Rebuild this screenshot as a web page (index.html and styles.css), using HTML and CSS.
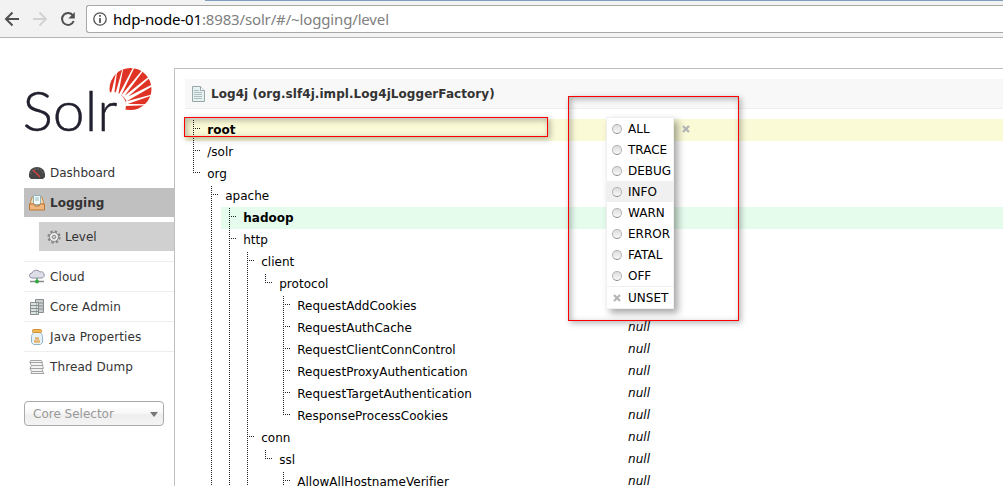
FILE: index.html
```html
<!DOCTYPE html>
<html lang="en">
<head>
<meta charset="utf-8">
<title>Solr Admin</title>
<link rel="stylesheet" href="styles.css">
</head>
<body>
<header class="toolbar">
  <svg class="nav" width="86" height="27" viewBox="0 5 86 27" fill="none" stroke-width="2">
    <path d="M19 19H6.500M12.500 12.500L6 19l6.500 6.500" stroke="#505050"/>
    <path d="M33 19h12.500M39.500 12.500L46 19l-6.500 6.500" stroke="#d2d2d2"/>
    <path d="M73 15.500A6 6 0 1 0 73.700 21" stroke="#505050"/><path d="M74.800 12v6.500h-6.500z" fill="#505050"/>
  </svg>
  <div class="address">
    <svg width="14" height="14" viewBox="0 0 14 14"><circle cx="7" cy="7" r="6.200" fill="none" stroke="#505050" stroke-width="1.300"/><path d="M7 6v5M7 3v1.700" stroke="#505050" stroke-width="1.700"/></svg>
    <span class="url"><span class="host">hdp-node-01</span>:8983/solr/#/~logging/level</span>
  </div>
</header>
<div class="page">
  <aside class="side">
    <svg class="logo" width="132" height="70" viewBox="22 66 132 70">
      <circle cx="130.500" cy="89" r="21" fill="#df3425"/>
      <g transform="translate(104 64) scale(.3333)" fill="#fff">
        <circle cx="26" cy="124" r="40"/>
        <path d="M22 84L37 24l2 0L31 88zM34 90L56 12l2 0L43 90zM44 92L88 9l3 2L52 94zM52 94L115 18l3 2L59 99zM58 98L138 35l3 3L64 105zM62 103L146 61l2 4L68 112zM62 113L146 91l0 3L68 121zM54 119L128 121l-3 3L66 126z"/>
      </g>
      <text class="wordmark" x="22.500" y="131" textLength="95" lengthAdjust="spacingAndGlyphs">Solr</text>
    </svg>
    <nav class="menu">
      <a class="item first"><svg width="16" height="16" viewBox="0 0 16 16"><path d="M0 12V9a8 7 0 0 1 16 0v3l-2 2H2z" fill="#464646"/><path d="M2 9a6 5 0 0 1 12 0" fill="none" stroke="#888" stroke-dasharray="1 2"/><path d="M4 5l7 7" stroke="#e23e3e" stroke-width="1.200"/></svg>Dashboard</a>
      <a class="item active"><svg width="16" height="16" viewBox="0 0 16 16"><path d="M3 2h10l2 7H1z" fill="#f0ddbd" stroke="#c28b4e"/><path d="M4.500.500h7v9h-7z" fill="#f4fbfb" stroke="#8fb1b7"/><path d="M6 3h4M6 5h4" stroke="#91bcc4"/><path d="M.500 9H5l1 2h4l1-2h4.500v6H.500z" fill="#efb77d" stroke="#bd7635"/></svg>Logging</a>
      <a class="item sub"><svg width="14" height="14" viewBox="0 0 14 14"><circle cx="7" cy="7" r="5.600" fill="none" stroke="#838383" stroke-width="2" stroke-dasharray="2.400 2"/><circle cx="7" cy="7" r="4.500" fill="#eee" stroke="#888"/><circle cx="7" cy="7" r="1.800" fill="#d0d0d0" stroke="#888"/></svg>Level</a>
      <a class="item"><svg width="16" height="16" viewBox="0 0 16 16"><path d="M3 9a2.500 2.500 0 0 1 0-5 4.500 4 0 0 1 8-1 3 3 0 1 1 2 6z" fill="#dedee8" stroke="#9292a3"/><path d="M1 12.500h14" stroke="#888" stroke-width="1.500"/><path d="M8 9v4" stroke="#387d38"/><circle cx="8" cy="12.500" r="2" fill="#33aa3d"/></svg>Cloud</a>
      <a class="item"><svg width="16" height="16" viewBox="0 0 16 16"><path d="M6.500.500h8v13h-8z" fill="#c9cecf" stroke="#888d90"/><path d="M7 4h7M7 7h7M7 10h7" stroke="#888d90"/><path d="M1.500 3.500h8v12h-8z" fill="#dce1e1" stroke="#888d90"/><path d="M2 6.500h7M2 9.500h7M2 12.500h7" stroke="#888d90"/><path d="M7 5h1M7 8h1M7 11h1M7 14h1" stroke="#5e9270"/></svg>Core Admin</a>
      <a class="item"><svg width="16" height="16" viewBox="0 0 16 16"><path d="M4 3.500h8c0 2 1.500 2 1.500 4v6l-2 2h-7l-2-2v-6c0-2 1.500-2 1.500-4z" fill="#e6f1f7" stroke="#8eb4cc"/><rect x="3.500" y=".500" width="9" height="3" rx="1" fill="#f2b750" stroke="#d19433"/><path d="M5 12.500h6M6 9.500h4" stroke="#e4b36b" stroke-width="2.500"/></svg>Java Properties</a>
      <a class="item"><svg width="16" height="16" viewBox="0 0 16 16" fill="#f4f4f4" stroke="#a4a4a4"><path d="M2.500 12.500h11l1.500 2H2zM1 9.500h11.500l1.500 3H2.500zM2.500 6.500h11l1 3H1zM1 3.500h11.500l1.500 3H2.500zM1.500 1.500h11l1 2H1z"/></svg>Thread Dump</a>
    </nav>
    <div class="selector"><span>Core Selector</span><i class="caret"></i></div>
  </aside>
  <main class="content">
    <h2 class="title"><svg width="14" height="16" viewBox="0 0 14 16"><path d="M1.500.500h8l4 4v11h-12z" fill="#e8f1f1" stroke="#96a8a8"/><path d="M9.500.500v4h4" fill="#fff" stroke="#96a8a8"/><path d="M3 4.500h5M3 6.500h8M3 8.500h8M3 10.500h8M3 12.500h8" stroke="#aebfc0"/></svg><span>Log4j (org.slf4j.impl.Log4jLoggerFactory)</span></h2>
    <ul class="tree">
      <li><div class="row root"><b>root</b></div></li>
      <li><div class="row"><span>/solr</span></div></li>
      <li class="last"><div class="row"><span>org</span></div>
        <ul>
          <li><div class="row"><span>apache</span></div>
            <ul>
              <li><div class="row set"><b>hadoop</b></div></li>
              <li><div class="row"><span>http</span></div>
                <ul>
                  <li><div class="row"><span>client</span></div>
                    <ul>
                      <li class="last"><div class="row"><span>protocol</span></div>
                        <ul>
                          <li><div class="row"><span>RequestAddCookies</span></div></li>
                          <li><div class="row"><span>RequestAuthCache</span><em>null</em></div></li>
                          <li><div class="row"><span>RequestClientConnControl</span><em>null</em></div></li>
                          <li><div class="row"><span>RequestProxyAuthentication</span><em>null</em></div></li>
                          <li><div class="row"><span>RequestTargetAuthentication</span><em>null</em></div></li>
                          <li class="last"><div class="row"><span>ResponseProcessCookies</span><em>null</em></div></li>
                        </ul>
                      </li>
                    </ul>
                  </li>
                  <li><div class="row"><span>conn</span><em>null</em></div>
                    <ul>
                      <li class="last"><div class="row"><span>ssl</span><em>null</em></div>
                        <ul>
                          <li><div class="row"><span>AllowAllHostnameVerifier</span><em>null</em></div></li>
                        </ul>
                      </li>
                    </ul>
                  </li>
                </ul>
              </li>
            </ul>
          </li>
        </ul>
      </li>
    </ul>
  </main>
</div>
<div class="levels">
  <a><i class="dot"></i>ALL</a>
  <a><i class="dot"></i>TRACE</a>
  <a><i class="dot"></i>DEBUG</a>
  <a class="hover"><i class="dot"></i>INFO</a>
  <a><i class="dot"></i>WARN</a>
  <a><i class="dot"></i>ERROR</a>
  <a><i class="dot"></i>FATAL</a>
  <a><i class="dot"></i>OFF</a>
  <a class="unset"><svg class="x" width="10" height="8" viewBox="0 0 10 8"><path d="M2 1l6 6M8 1L2 7" stroke="#b5b5b5" stroke-width="2.200"/></svg>UNSET</a>
</div>
<svg class="close" width="10" height="8" viewBox="0 0 10 8"><path d="M2 1l6 6M8 1L2 7" stroke="#b5b5b5" stroke-width="2.400"/></svg>
<div class="mark mark-root"></div>
<div class="mark mark-levels"></div>
</body>
</html>
```
FILE: styles.css
```css
* { box-sizing: border-box; }
body { margin: 0; width: 1003px; height: 486px; overflow: hidden; position: relative; background: #fff; color: #000; font: 12px/22px "DejaVu Sans", Verdana, sans-serif; }
svg { display: block; flex: none; }
ul { list-style: none; margin: 0; padding: 0; }

.toolbar { display: flex; height: 38px; padding-top: 5px; background: linear-gradient(#7f9dbf, #7f9dbf) 205px 0 / 798px 1px no-repeat, #f2f2f2; border-bottom: 1px solid #b4b4b4; }
.address { flex: 1; height: 28px; display: flex; align-items: center; gap: 6px; padding-left: 6px; background: #fff; border: 1px solid #a8a8a8; border-right: 0; border-radius: 3px 0 0 3px; }
.url { font: 15px/26px "Noto Sans", sans-serif; letter-spacing: -.15px; color: #808080; white-space: nowrap; }
.host { color: #000; }

.page { display: flex; height: 448px; padding-top: 30px; }
.side { width: 174px; padding-left: 24px; }
.logo { margin: -2px 0 0 -2px; overflow: visible; }
.wordmark { font: 300 56px Lato, sans-serif; fill: #21202e; stroke: #21202e; stroke-width: .4px; }
.menu { padding-top: 21px; }
.item { display: flex; align-items: center; height: 30px; padding-left: 5px; gap: 5px; border-top: 1px solid #eee; color: #333; letter-spacing: .1px; }
.first { border-top: 0; height: 31px; letter-spacing: 0; }
.active { height: 29px; border: 0; background: #c0c0c0; font-weight: bold; letter-spacing: 0; }
.sub { height: 29px; margin: 5px 0 10px 15px; padding-left: 8px; gap: 4px; border: 0; background: #d0d0d0; letter-spacing: 0; }
.selector { display: flex; align-items: center; justify-content: space-between; width: 140px; height: 25px; margin-top: 20px; padding: 0 5px 0 8px; border: 1px solid #aaa; border-radius: 4px; background: linear-gradient(#fff 20%, #f6f6f6 50%, #eee 52%, #f4f4f4); color: #999; }
.caret { margin-top: 1px; border: 4.5px solid transparent; border-top: 5px solid #777; border-bottom: 0; }

.content { flex: 1; padding: 10px 0 0 10px; border: 1px solid #c0c0c0; border-width: 1px 0 0 1px; }
.title { display: flex; align-items: center; gap: 6px; height: 30px; margin: 0 0 10px; padding-left: 6px; background: #f8f8f8; border-bottom: 1px solid #eee; font-size: 12px; letter-spacing: .06px; color: #333; }

.tree li { background: repeating-linear-gradient(#222 0 1px, transparent 1px 2px) 8px 1px / 1px 100% no-repeat; }
.tree li.last { background-size: 1px 9px; }
.tree ul { margin-left: 18px; }
.row { display: flex; justify-content: space-between; height: 22px; padding-left: 22.2px; line-height: 23px; letter-spacing: .03px; background: repeating-linear-gradient(90deg, #222 0 1px, transparent 1px 2px) 8px 9px / 7px 1px no-repeat; }
.root, .set { background-image: repeating-linear-gradient(90deg, #222 0 1px, transparent 1px 2px), repeating-linear-gradient(#222 0 1px, transparent 1px 2px); background-position: 8px 9px, 8px 1px; background-size: 7px 1px, 1px 21px; }
.root { background-color: #fafad7; }
.set { background-color: #e5fced; }
.row em { width: 375px; line-height: 21px; }

.levels { position: absolute; left: 606px; top: 117px; width: 68px; background: #fff; border: 1px solid #f0f0f0; box-shadow: 4px 4px 7px rgba(0, 0, 0, .35); }
.levels a { display: flex; align-items: center; gap: 6px; height: 21px; padding-left: 5px; }
.levels .hover { background: #f0f0f0; }
.levels .unset { height: 22px; border-top: 1px solid #f0f0f0; }
.dot { width: 10px; height: 10px; border: 1px solid #b4b4b4; border-bottom-color: #888; border-radius: 50%; background: linear-gradient(#ddd, #f8f8f8); }
.close { position: absolute; left: 681px; top: 125px; }
.mark { position: absolute; border: 1px solid #f00; box-shadow: 2px 2px 6px rgba(0, 0, 0, .3), inset 2px 2px 6px rgba(0, 0, 0, .3); }
.mark-root { left: 184px; top: 117px; width: 364px; height: 20px; }
.mark-levels { left: 568px; top: 96px; width: 171px; height: 225px; }
```
